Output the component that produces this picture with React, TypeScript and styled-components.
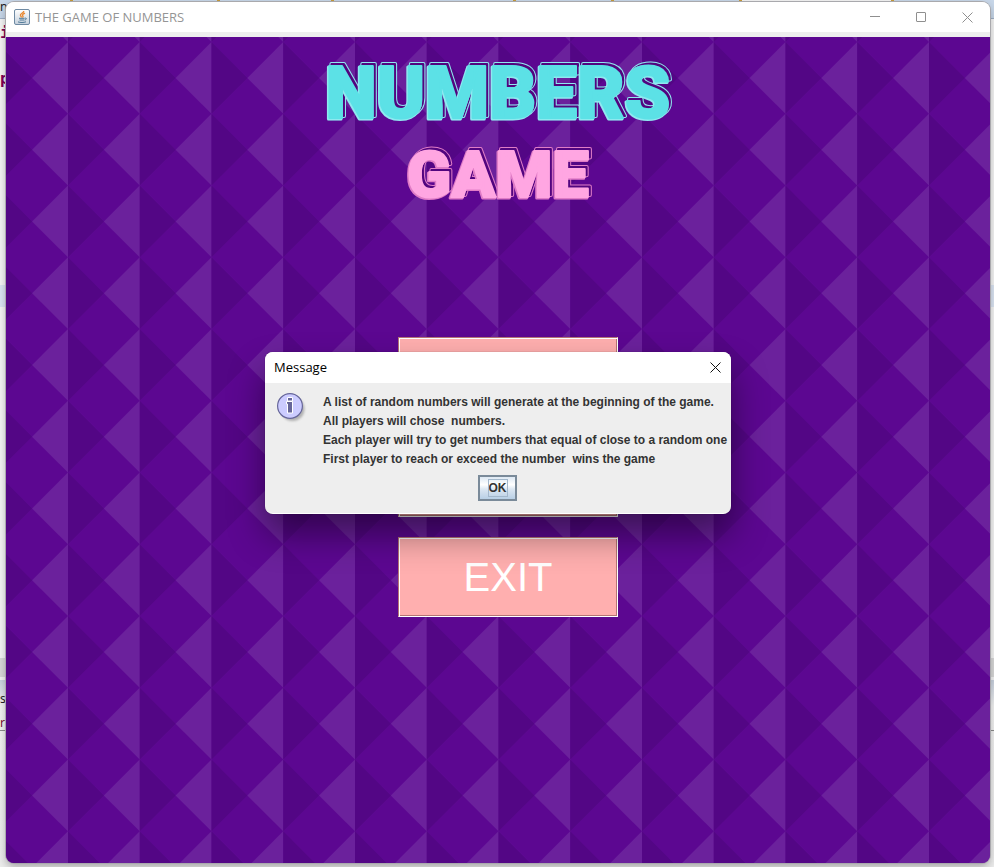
import React from "react";
import styled, { createGlobalStyle } from "styled-components";

const GlobalStyle = createGlobalStyle`
  * { box-sizing: border-box; }
  body { margin: 0; background: #f0f0f0; }
  button { margin: 0; padding: 0; cursor: pointer; }
`;

const Desktop = styled.div`
  position: relative;
  display: flex;
  min-height: 100vh;
  padding: 2px 4px 4px 6px;
  overflow: hidden;
  isolation: isolate;
  background: #efefef;
`;

const Editor = styled.div`
  position: absolute;
  inset: 0;
  z-index: -1;
  display: flex;
  flex-direction: column;
  overflow: hidden;
`;

const EditorTabs = styled.div`
  display: flex;
  height: 19px;
  background: #c8d7e9;
  border-bottom: 1px solid #9fb0c6;
  font: 12px/14px "Noto Sans", sans-serif;
  color: #222;
`;

const EditorTab = styled.span<{ $width: number; $active?: boolean }>`
  width: ${(p) => p.$width}px;
  height: 18px;
  border-right: 3px solid #c79b3c;
  background: ${(p) => (p.$active ? "#f4f4f4" : "#c8d7e9")};
`;

const EditorPane = styled.div<{ $grow: number }>`
  display: flex;
  flex-direction: column;
  gap: 24px;
  flex: ${(p) => p.$grow} 0 0;
  background: #f6f6f6;
  padding-top: 3px;
  font: bold 16px/22px "DejaVu Sans Mono", monospace;
  color: #7f0055;
`;

const Highlight = styled.div`
  height: 22px;
  background: #dce6f4;
`;

const Splitter = styled.div`
  height: 22px;
  background: #d9d9d9;
  border-bottom: 3px solid #f4f4f4;
`;

const Console = styled.div`
  flex: 189 0 0;
  background: linear-gradient(#c9d2e0, #f3f3f3 26px, #ededed);
  font: 12px/24px "Noto Sans", sans-serif;
`;

const ConsoleLine = styled.div<{ $link?: boolean }>`
  height: ${(p) => (p.$link ? 20 : 24)}px;
  color: ${(p) => (p.$link ? "#7a1030" : "#222")};
  border-bottom: ${(p) => (p.$link ? "1px solid #8c8c8c" : "0")};

  &:first-child { margin-top: 7px; }
`;

const Window = styled.main`
  flex: 1;
  display: flex;
  flex-direction: column;
  overflow: hidden;
  border-radius: 8px;
  background: #eeeeee;
  box-shadow: 0 0 0 1px #a9a9ad, 0 4px 10px rgba(0, 0, 0, 0.3);
`;

const TitleBar = styled.header`
  display: flex;
  align-items: center;
  height: 30px;
  margin-bottom: 5px;
  padding-left: 8px;
  background: #fff;
`;

const WindowTitle = styled.h1`
  flex: 1;
  margin: 0 0 0 5px;
  font: 13px/18px "Open Sans", "Noto Sans", sans-serif;
  color: #959595;
`;

const WindowButton = styled.button`
  display: flex;
  align-items: center;
  justify-content: center;
  width: 46px;
  height: 28px;
  border: 0;
  background: transparent;
  color: #8f8f8f;
`;

const Stage = styled.section`
  position: relative;
  isolation: isolate;
  flex: 1;
  display: flex;
  flex-direction: column;
  align-items: center;
  background: #5c0791;
`;

const Backdrop = styled.svg`
  position: absolute;
  inset: 0;
  z-index: -1;
  width: 100%;
  height: 100%;
`;

const Logo = styled.svg`
  display: block;
  width: 360px;
  height: 180px;
  font-family: Roboto, "Liberation Sans", sans-serif;
  font-weight: 900;
`;

const Menu = styled.nav`
  display: flex;
  flex-direction: column;
  gap: 20px;
  margin: 120px 0 40px 20px;
`;

const MenuButton = styled.button`
  width: 220px;
  height: 80px;
  border: 1px solid;
  border-color: #b57474 #fff #fff #b57474;
  box-shadow: inset 1px 1px #fff, inset -1px -1px #b57474;
  background: #ffafaf;
  font: 40px/48px "Liberation Sans", Arial, sans-serif;
  color: #fff;
`;

const Overlay = styled.div`
  position: absolute;
  inset: 0;
  display: flex;
  align-items: center;
  justify-content: center;
  padding: 0 0 2px 2px;
  pointer-events: none;
`;

const Dialog = styled.div`
  pointer-events: auto;
  width: 466px;
  border-radius: 8px;
  overflow: hidden;
  background: #eeeeee;
  border-bottom: 1px solid #fff;
  box-shadow: 0 0 1px rgba(0, 0, 0, 0.5), 0 20px 36px rgba(0, 0, 0, 0.45);
`;

const DialogHeader = styled.header`
  display: flex;
  align-items: center;
  justify-content: space-between;
  height: 31px;
  padding-left: 9px;
  background: #fff;
`;

const DialogTitle = styled.h2`
  margin: 0;
  font: 13px/18px "Open Sans", "Noto Sans", sans-serif;
  color: #000;
`;

const DialogClose = styled.button`
  display: flex;
  align-items: center;
  justify-content: center;
  width: 32px;
  height: 30px;
  border: 0;
  background: transparent;
  color: #111;
`;

const DialogBody = styled.div`
  display: flex;
  align-items: flex-start;
  gap: 16px;
  padding: 9px 0 0 10px;
`;

const Message = styled.div`
  padding-top: 1px;
  font: bold 12px/19px "Liberation Sans", Arial, sans-serif;
  color: #333;
  white-space: pre;
`;

const Line = styled.p`
  margin: 0;
`;

const DialogActions = styled.footer`
  display: flex;
  justify-content: center;
  padding: 6px 1px 12px 0;
`;

const OkButton = styled.button`
  display: flex;
  align-items: center;
  justify-content: center;
  width: 39px;
  height: 26px;
  border: 2px solid #7a8a99;
  background: linear-gradient(#dde8f3, #fff 35%, #dce7f2 55%, #b8cfe5);
  font: bold 12px/16px "Liberation Sans", Arial, sans-serif;
  color: #333;
`;

const FocusRing = styled.span`
  outline: 1px solid #a3b8cc;
`;

const InfoGlyph = styled.svg`
  flex: none;
`;

const JavaIcon = () => (
  <svg width="16" height="16" viewBox="0 0 16 16" aria-hidden="true">
    <defs>
      <linearGradient id="cupBg" x1="0" y1="0" x2="0" y2="1">
        <stop offset="0" stopColor="#fff" />
        <stop offset="1" stopColor="#c4d0dc" />
      </linearGradient>
    </defs>
    <rect x=".5" y=".5" width="15" height="15" rx="1.5" fill="url(#cupBg)" stroke="#6f8aa3" />
    <path d="M9.8 2C10 4 5.5 4.8 6.4 6.6c.4.9 1.2 1.2 1.2 2M11 4.2C8.5 5.2 8 6 8.7 6.8c.6.7.4 1.2-.2 1.7" fill="none" stroke="#e98a35" strokeWidth="1.3" />
    <path d="M5 9.3h5.5M5.5 11h4.7M4 12.9c2.4.8 5.6.8 8-.1M10.8 9.2c2.4-.6 2 1.5-.2 1.8" fill="none" stroke="#4e7896" />
  </svg>
);

const CrossIcon = () => (
  <svg width="11" height="11" viewBox="0 0 11 11" aria-hidden="true">
    <path d="M.5.5l10 10M10.5.5l-10 10" stroke="currentColor" fill="none" />
  </svg>
);

const InfoIcon = () => (
  <InfoGlyph width="32" height="32" viewBox="0 0 32 32" role="img" aria-label="Information">
    <defs>
      <filter id="soft" x="-20%" y="-20%" width="150%" height="150%">
        <feGaussianBlur stdDeviation="1.3" />
      </filter>
    </defs>
    <circle cx="17.5" cy="17" r="12" fill="#777" opacity=".5" filter="url(#soft)" />
    <circle cx="15" cy="14" r="12.4" fill="#ccccff" stroke="#666699" strokeWidth="1.2" />
    <path d="M12.5 5.500h5v3.500h-5zM12 9.500h5.500v11.500h-5v-9h-1v-2.500z" fill="#666699" stroke="#fff" />
  </InfoGlyph>
);

type WordProps = { id: string; text: string; y: number; size: number; fill: string; edge: string };

const LogoWord = ({ id, text, y, size, fill, edge }: WordProps) => (
  <>
    <defs>
      <text id={id} x="180" y={y} fontSize={size} textAnchor="middle" strokeLinejoin="round">
        {text}
      </text>
    </defs>
    <use href={`#${id}`} x="2" y="-2" fill={edge} stroke={edge} strokeWidth="4" />
    <use href={`#${id}`} x="2" y="-2" fill="#52057f" stroke="#52057f" strokeWidth="2" />
    <use href={`#${id}`} x="-1" y="1" fill={edge} stroke={edge} strokeWidth="3" />
    <use href={`#${id}`} fill={fill} stroke={fill} strokeWidth="2" />
  </>
);

const messageLines = [
  "A list of random numbers will generate at the beginning of the game.",
  "All players will chose  numbers.",
  "Each player will try to get numbers that equal of close to a random one",
  "First player to reach or exceed the number  wins the game",
];

export default function App() {
  return (
    <>
      <GlobalStyle />
      <Desktop>
        <Editor aria-hidden="true">
          <EditorTabs>
            <EditorTab $width={73}>ne</EditorTab>
            <EditorTab $width={147} />
            <EditorTab $width={114} />
            <EditorTab $width={182} />
            <EditorTab $width={98} />
            <EditorTab $width={128} />
            <EditorTab $width={152} $active />
          </EditorTabs>
          <EditorPane $grow={266}>
            <span>i</span>
            <span>p</span>
          </EditorPane>
          <Highlight />
          <EditorPane $grow={353} />
          <Splitter />
          <Console>
            <ConsoleLine>s</ConsoleLine>
            <ConsoleLine $link>rs</ConsoleLine>
          </Console>
        </Editor>

        <Window>
          <TitleBar>
            <JavaIcon />
            <WindowTitle>THE GAME OF NUMBERS</WindowTitle>
            <WindowButton aria-label="Minimize">
              <svg width="10" height="10" viewBox="0 0 10 10">
                <path d="M0 4.5h10" stroke="currentColor" />
              </svg>
            </WindowButton>
            <WindowButton aria-label="Maximize">
              <svg width="10" height="10" viewBox="0 0 10 10">
                <rect x=".5" y=".5" width="9" height="9" rx=".5" fill="none" stroke="currentColor" />
              </svg>
            </WindowButton>
            <WindowButton aria-label="Close">
              <CrossIcon />
            </WindowButton>
          </TitleBar>

          <Stage>
            <Backdrop aria-hidden="true">
              <defs>
                <pattern id="diamonds" x="62" y="5" width="287" height="287" patternUnits="userSpaceOnUse" viewBox="0 0 8 8">
                  {Array.from({ length: 16 }, (_, i) => {
                    const x = (i % 4) * 2;
                    const y = Math.floor(i / 4) * 2;
                    return (
                      <g key={i}>
                        <path d={`M${x} ${y}l1 1l-1 1z`} fill="#530685" />
                        <path d={`M${x + 2} ${y}l-1 1l1 1z`} fill="#6b219c" />
                      </g>
                    );
                  })}
                </pattern>
              </defs>
              <rect width="100%" height="100%" fill="url(#diamonds)" />
            </Backdrop>

            <Logo viewBox="0 0 360 180" role="img" aria-label="Numbers Game">
              <LogoWord id="numbers" text="NUMBERS" y={81} size={73} fill="#5ce1e6" edge="#8fe9f0" />
              <LogoWord id="game" text="GAME" y={160} size={65} fill="#ffa6e2" edge="#e07cc6" />
            </Logo>

            <Menu>
              <MenuButton aria-label="Start" />
              <MenuButton aria-label="Rules" />
              <MenuButton>EXIT</MenuButton>
            </Menu>
          </Stage>
        </Window>

        <Overlay>
          <Dialog role="dialog" aria-labelledby="dialog-title">
            <DialogHeader>
              <DialogTitle id="dialog-title">Message</DialogTitle>
              <DialogClose aria-label="Close dialog">
                <CrossIcon />
              </DialogClose>
            </DialogHeader>
            <DialogBody>
              <InfoIcon />
              <Message>
                {messageLines.map((line) => (
                  <Line key={line}>{line}</Line>
                ))}
              </Message>
            </DialogBody>
            <DialogActions>
              <OkButton>
                <FocusRing>OK</FocusRing>
              </OkButton>
            </DialogActions>
          </Dialog>
        </Overlay>
      </Desktop>
    </>
  );
}
